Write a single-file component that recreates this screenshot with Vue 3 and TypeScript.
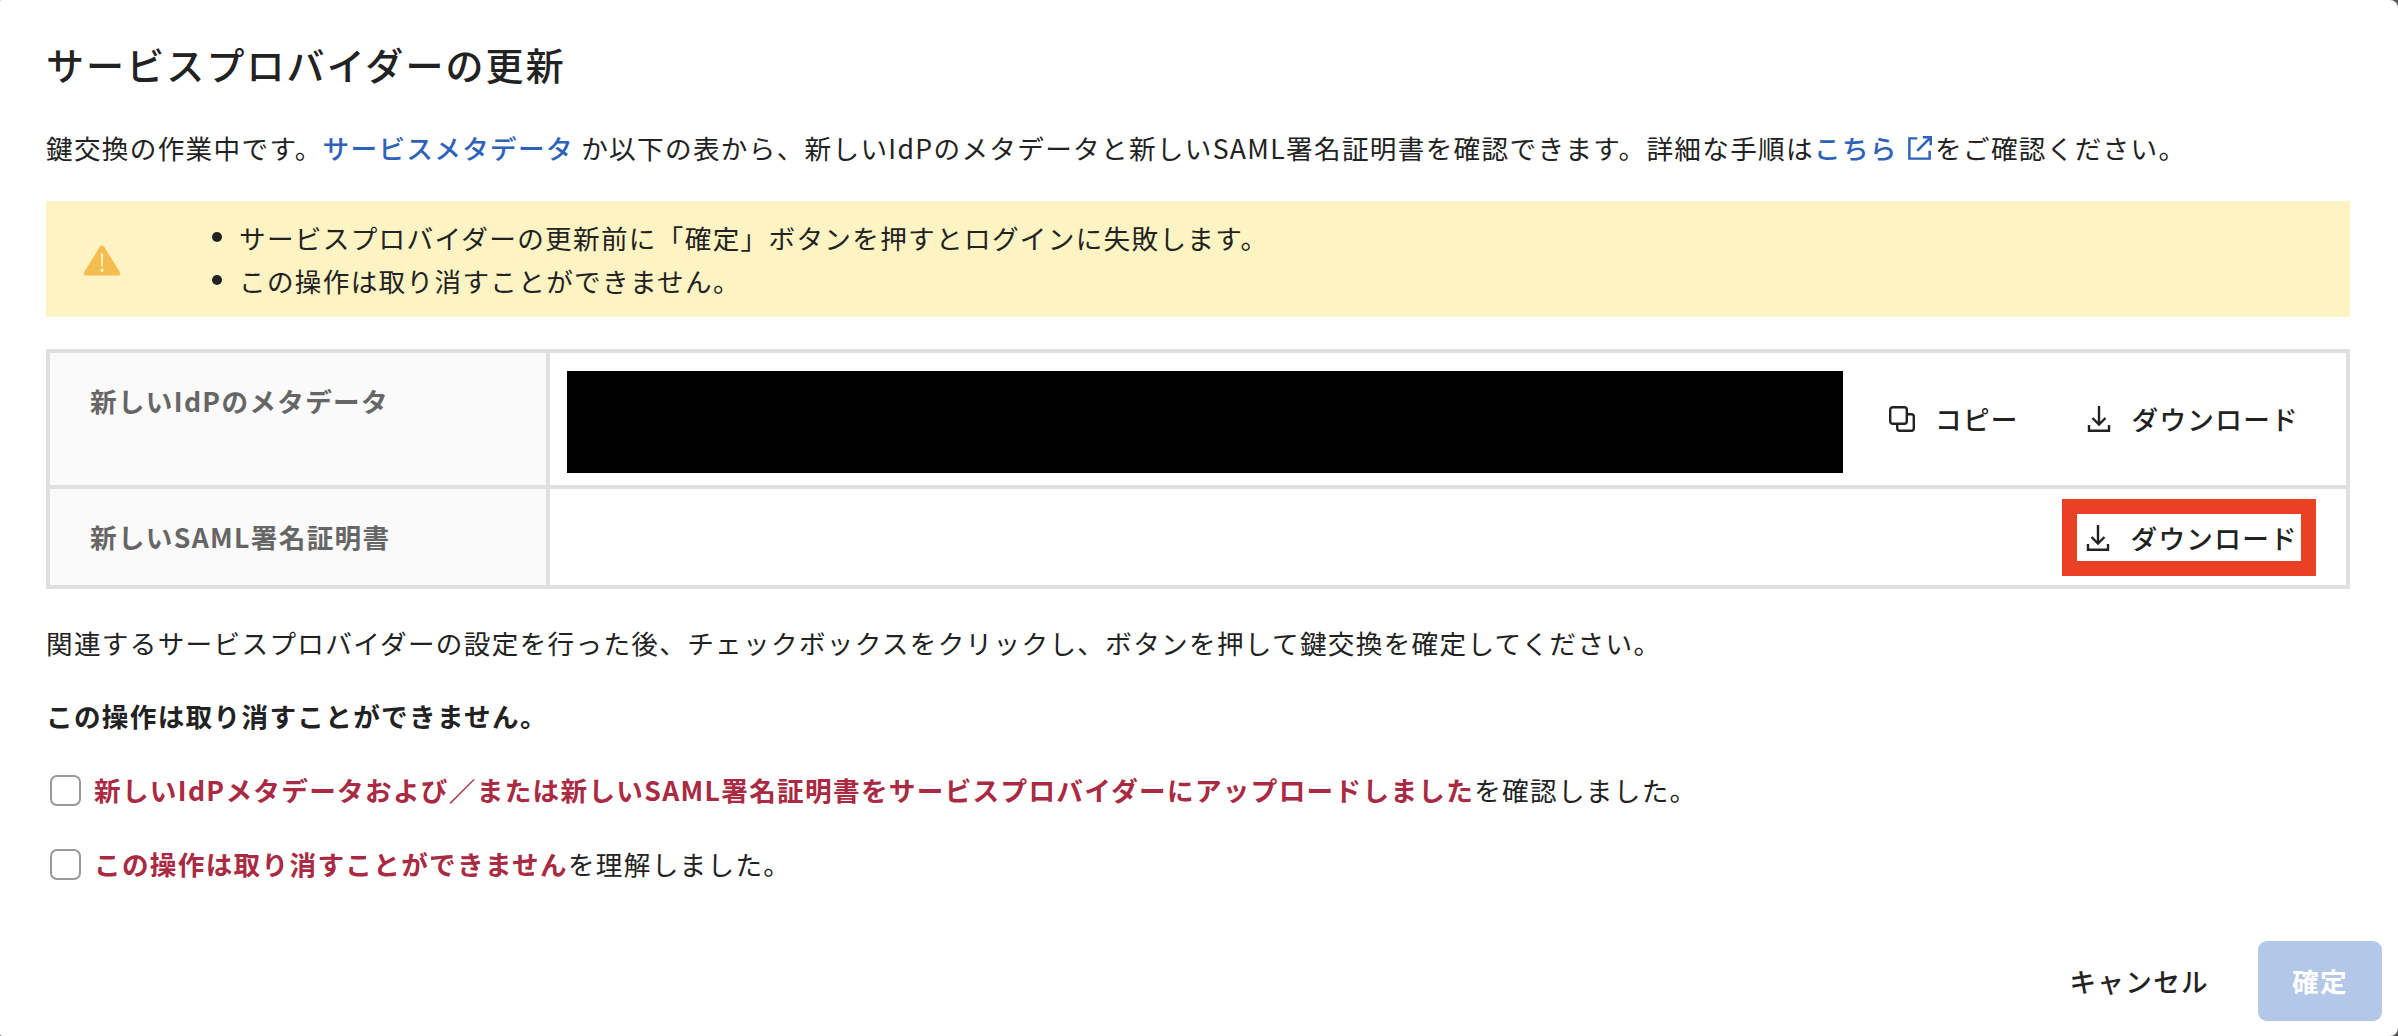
<script setup lang="ts">
const bullets: string[] = [
  'サービスプロバイダーの更新前に「確定」ボタンを押すとログインに失敗します。',
  'この操作は取り消すことができません。',
]
</script>

<template>
  <div class="modal">
    <h1 class="title">サービスプロバイダーの更新</h1>
    <p class="intro">
      鍵交換の作業中です。<a class="link">サービスメタデータ</a> か以下の表から、新しいIdPのメタデータと新しいSAML署名証明書を確認できます。詳細な手順は<a class="link">こちら <svg class="ext" viewBox="0 0 24 24" fill="none" stroke="currentColor" stroke-width="2.2"><path d="M10 3H3v18h18v-7" /><path d="M10 14 21.500 2.500M15 2h7v7" /></svg></a>をご確認ください。
    </p>

    <div class="alert">
      <svg class="warn" viewBox="0 0 38 32"><path d="M19 1.500c1 0 1.800.6 2.400 1.600l15.400 25c1 1.700 0 3.400-2 3.400H3.200c-2 0-3-1.700-2-3.400l15.400-25c.6-1 1.400-1.600 2.400-1.600z" fill="#f5bd4f" /><path d="M17.800 9.500h2.400l-.5 13h-1.400zM19 24.500a1.700 1.700 0 1 1 0 3.400 1.700 1.700 0 0 1 0-3.400z" fill="#fdf3c3" /></svg>
      <ul class="alert-list">
        <li v-for="b in bullets" :key="b">{{ b }}</li>
      </ul>
    </div>

    <div class="table">
      <div class="label row1">新しいIdPのメタデータ</div>
      <div class="value row1">
        <div class="redacted"></div>
        <button class="action copy">
          <svg class="icon" viewBox="0 0 28 28" fill="none" stroke="currentColor" stroke-width="2.400"><rect x="2.200" y="2.200" width="16.600" height="16.600" rx="2.500" /><path d="M18.800 9.200h4.500a2.500 2.500 0 0 1 2.500 2.500v11.600a2.500 2.500 0 0 1-2.500 2.500H11.700a2.500 2.500 0 0 1-2.500-2.500v-4.500" /></svg>
          コピー
        </button>
        <button class="action lifted">
          <svg class="icon" viewBox="0 0 28 28" fill="none" stroke="currentColor" stroke-width="2.400"><path d="M14 1v18M7.500 13l6.500 6.500 6.500-6.500" /><path d="M4 20v5.800h20V20" /></svg>
          ダウンロード
        </button>
      </div>
      <div class="label row2">新しいSAML署名証明書</div>
      <div class="value row2">
        <div class="highlight">
          <button class="action">
            <svg class="icon" viewBox="0 0 28 28" fill="none" stroke="currentColor" stroke-width="2.400"><path d="M14 1v18M7.500 13l6.500 6.500 6.500-6.500" /><path d="M4 20v5.800h20V20" /></svg>
            ダウンロード
          </button>
        </div>
      </div>
    </div>

    <p class="note">関連するサービスプロバイダーの設定を行った後、チェックボックスをクリックし、ボタンを押して鍵交換を確定してください。</p>
    <p class="strong">この操作は取り消すことができません。</p>

    <label class="check first"><span class="box"></span><span><b class="red">新しいIdPメタデータおよび／または新しいSAML署名証明書をサービスプロバイダーにアップロードしました</b>を確認しました。</span></label>
    <label class="check second"><span class="box"></span><span><b class="red">この操作は取り消すことができません</b>を理解しました。</span></label>

    <div class="footer">
      <button class="cancel">キャンセル</button>
      <button class="confirm">確定</button>
    </div>
  </div>
</template>

<style>
html, body { margin: 0; background: #555; }
</style>

<style scoped>
.modal {
  box-sizing: border-box;
  width: 2398px;
  height: 1036px;
  padding: 38px 16px 15px 46px;
  background: #fff;
  border-radius: 1px 8px 8px 2px;
  color: #222;
  font-family: "Noto Sans CJK JP", "Noto Sans", sans-serif;
  font-size: 26.6px;
  line-height: 40px;
  letter-spacing: 1.33px;
  display: flex;
  flex-direction: column;
  overflow: hidden;
}
.title { margin: 0; font-size: 38px; line-height: 52px; font-weight: 500; letter-spacing: 2.1px; color: #222; }
.intro { margin: 38px 0 0; height: 40px; white-space: nowrap; }
.link { color: #2d62b8; font-weight: 500; }
.ext { width: 27px; height: 27px; vertical-align: -3px; margin-left: 1px; margin-right: 2px; }
.alert {
  margin-top: 33px;
  width: 2304px;
  height: 116px;
  background: #fdf3c3;
  display: flex;
  align-items: center;
  flex: none;
}
.warn { width: 38px; height: 32px; margin-left: 37px; margin-top: 2px; flex: none; }
.alert-list { margin: 0; padding: 0 0 0 118px; list-style: none; line-height: 43px; }
.alert-list li { position: relative; }
.alert-list li::before {
  content: "";
  position: absolute;
  left: -27px;
  top: 16px;
  width: 10px;
  height: 10px;
  border-radius: 50%;
  background: #222;
}
.table {
  margin-top: 32px;
  width: 2304px;
  box-sizing: border-box;
  background: #e0e0e0;
  border: 4px solid #e0e0e0;
  display: grid;
  grid-template-columns: 496px 1fr;
  grid-template-rows: 132px 96px;
  gap: 4px;
  flex: none;
}
.label {
  background: #fafafa;
  padding: 28px 40px 0;
  color: #666;
  font-weight: 700;
}
.value { background: #fff; display: flex; }
.value.row1 { padding: 18px 44px 12px 17px; align-items: stretch; }
.value.row2 { justify-content: flex-end; align-items: flex-start; padding: 10px 30px 0 0; }
.redacted { width: 1276px; background: #000; flex: none; }
.action {
  border: 0;
  padding: 0 3px 0 7px;
  background: #fff;
  color: #222;
  font: inherit;
  font-weight: 500;
  letter-spacing: inherit;
  display: inline-flex;
  align-items: center;
  gap: 18px;
  white-space: nowrap;
  margin-left: auto;
}
.action.lifted { padding-bottom: 6px; }
.action.copy { margin-left: 38px; margin-right: 51px; gap: 19px; padding-bottom: 6px; }
.icon { width: 28px; height: 28px; flex: none; }
.highlight { border: 15px solid #ea4125; height: 47px; display: flex; }
.note { margin: 34px 0 0; }
.strong { margin: 33px 0 0; font-weight: 700; }
.check { display: flex; align-items: center; gap: 13px; padding-left: 4px; height: 40px; }
.check.first { margin-top: 34px; }
.check.second { margin-top: 34px; }
.box {
  box-sizing: border-box;
  width: 31px;
  height: 31px;
  border: 2px solid #999;
  border-radius: 7px;
  background: #fff;
  flex: none;
}
.red { color: #a92a42; font-weight: 700; }
.footer {
  margin-top: auto;
  display: flex;
  justify-content: flex-end;
  align-items: center;
  gap: 49px;
}
.cancel {
  border: 0;
  background: none;
  padding: 0;
  font: inherit;
  font-weight: 500;
  color: #222;
  letter-spacing: inherit;
}
.confirm {
  border: 0;
  width: 124px;
  height: 80px;
  border-radius: 9px;
  background: #b3c8e8;
  color: #fff;
  font: inherit;
  font-weight: 700;
  letter-spacing: inherit;
}
</style>
